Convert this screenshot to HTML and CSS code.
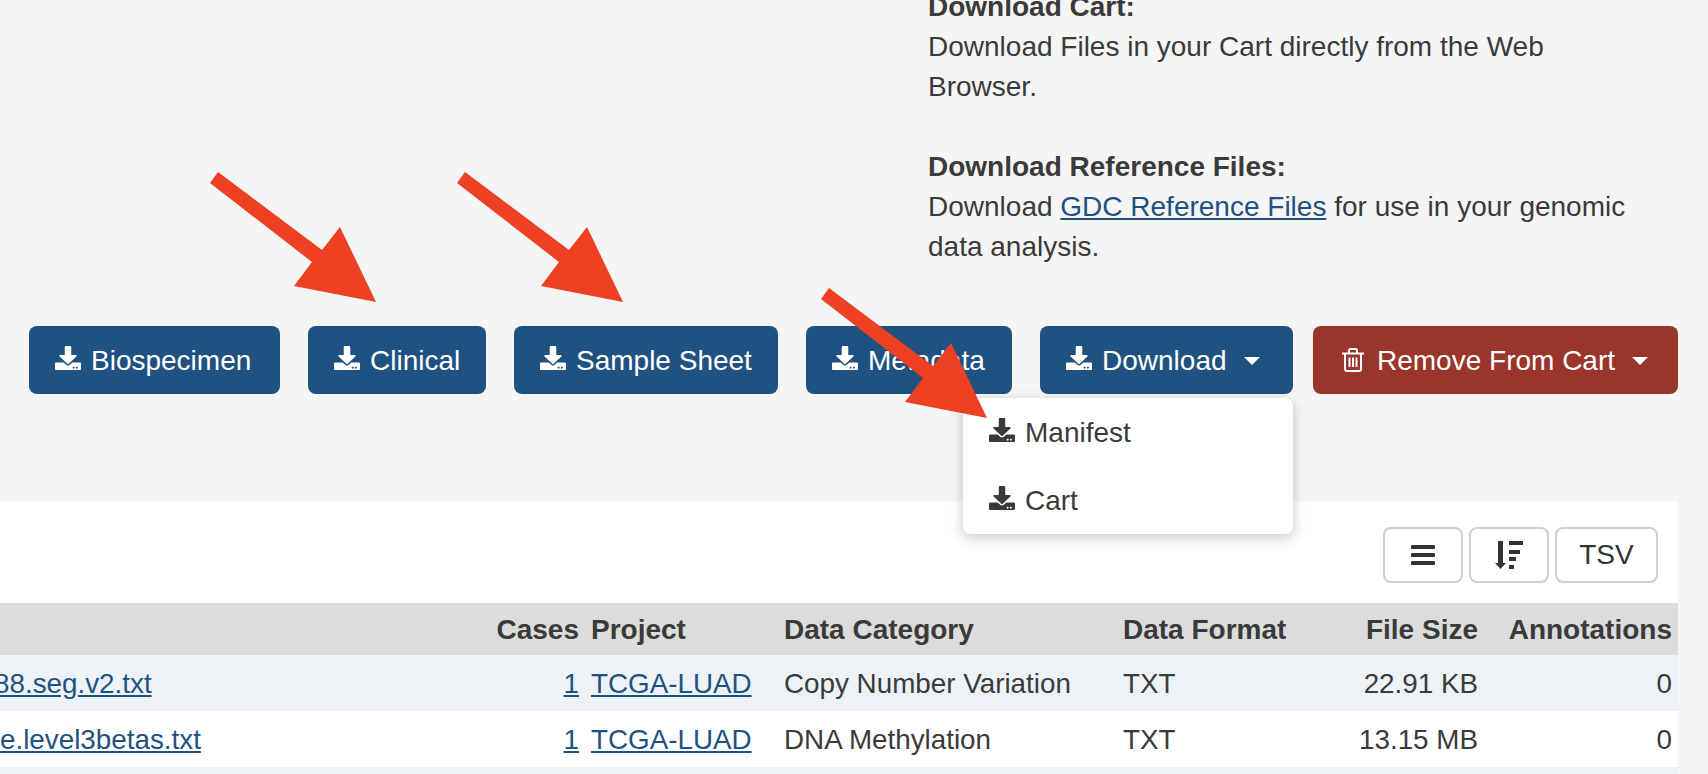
FILE: index.html
```html
<!DOCTYPE html>
<html>
<head>
    <title>Cart</title>
    <link rel="stylesheet" href="styles.css">
</head>
<body>
    <svg width="0" height="0" class="defs">
        <symbol id="icon-download" viewBox="0 0 512 512" preserveAspectRatio="none">
            <path d="M216 0h80c13.3 0 24 10.7 24 24v168h87.7c17.8 0 26.7 21.5 14.1 34.1L269.7 378.3c-7.5 7.5-19.8 7.5-27.3 0L90.1 226.1c-12.6-12.6-3.7-34.1 14.1-34.1H192V24c0-13.3 10.7-24 24-24zm296 376v112c0 13.3-10.7 24-24 24H24c-13.3 0-24-10.7-24-24V376c0-13.3 10.7-24 24-24h146.7l49 49c20.1 20.1 52.5 20.1 72.6 0l49-49H488c13.3 0 24 10.7 24 24zm-124 88c0-11-9-20-20-20s-20 9-20 20 9 20 20 20 20-9 20-20zm64 0c0-11-9-20-20-20s-20 9-20 20 9 20 20 20 20-9 20-20z"/>
        </symbol>
    </svg>

    <div class="page">
        <div class="help">
            <strong>Download Cart:</strong><br>
            Download Files in your Cart directly from the Web Browser.<br>
            <br>
            <strong>Download Reference Files:</strong><br>
            Download <a href="#">GDC Reference Files</a> for use in your genomic data analysis.
        </div>

        <div class="actions">
            <button class="btn btn-biospecimen"><svg class="icon"><use href="#icon-download"/></svg>Biospecimen</button>
            <button class="btn btn-clinical"><svg class="icon"><use href="#icon-download"/></svg>Clinical</button>
            <button class="btn btn-sample"><svg class="icon"><use href="#icon-download"/></svg>Sample Sheet</button>
            <button class="btn btn-metadata"><svg class="icon"><use href="#icon-download"/></svg>Metadata</button>
            <div class="dropdown">
                <button class="btn btn-download"><svg class="icon"><use href="#icon-download"/></svg>Download<span class="caret"></span></button>
                <ul class="menu">
                    <li><svg class="icon"><use href="#icon-download"/></svg>Manifest</li>
                    <li><svg class="icon"><use href="#icon-download"/></svg>Cart</li>
                </ul>
            </div>
            <button class="btn btn-danger">
                <svg class="icon-trash" viewBox="0 0 22 24" fill="none" stroke="currentColor" stroke-width="2">
                    <path d="M0 5.5h22M3 5.5V21a2 2 0 0 0 2 2h12a2 2 0 0 0 2-2V5.5M7 5V2.500A1.500 1.500 0 0 1 8.500 1h5A1.500 1.500 0 0 1 15 2.500V5M7.500 9.500v9.500M11 9.500v9.500M14.500 9.500v9.500"/>
                </svg>Remove From Cart<span class="caret"></span>
            </button>
        </div>

        <div class="panel">
            <div class="tools">
                <button class="tool">
                    <svg width="24" height="20" viewBox="0 0 24 20" fill="currentColor"><rect width="24" height="4" rx="1"/><rect y="8" width="24" height="4" rx="1"/><rect y="16" width="24" height="4" rx="1"/></svg>
                </button>
                <button class="tool">
                    <svg width="28" height="28" viewBox="0 0 28 28" fill="currentColor"><path d="M3 0h5v22h3l-5.500 6-5.500-6h3z"/><rect x="14" y="0" width="14" height="4"/><rect x="14" y="9" width="11" height="4"/><rect x="14" y="16" width="7" height="4"/><rect x="14" y="24" width="5" height="4"/></svg>
                </button>
                <button class="tool tool-text">TSV</button>
            </div>

            <table class="files">
                <colgroup>
                    <col class="col-file">
                    <col class="col-cases">
                    <col class="col-project">
                    <col class="col-category">
                    <col class="col-format">
                    <col class="col-size">
                    <col class="col-annotations">
                </colgroup>
                <thead>
                    <tr>
                        <th></th>
                        <th class="num">Cases</th>
                        <th>Project</th>
                        <th>Data Category</th>
                        <th>Data Format</th>
                        <th class="num">File Size</th>
                        <th class="num">Annotations</th>
                    </tr>
                </thead>
                <tbody>
                    <tr>
                        <td class="file"><a href="#" class="name-a">88.seg.v2.txt</a></td>
                        <td class="num"><a href="#">1</a></td>
                        <td><a href="#">TCGA-LUAD</a></td>
                        <td>Copy Number Variation</td>
                        <td>TXT</td>
                        <td class="num">22.91 KB</td>
                        <td class="num">0</td>
                    </tr>
                    <tr>
                        <td class="file"><a href="#">e.level3betas.txt</a></td>
                        <td class="num"><a href="#">1</a></td>
                        <td><a href="#">TCGA-LUAD</a></td>
                        <td>DNA Methylation</td>
                        <td>TXT</td>
                        <td class="num">13.15 MB</td>
                        <td class="num">0</td>
                    </tr>
                    <tr>
                        <td colspan="7">&nbsp;</td>
                    </tr>
                </tbody>
            </table>
        </div>

        <svg class="arrows" viewBox="0 0 1708 774" fill="#ee4023">
            <polygon points="218,172 322,250 340,227 376,302 294,286 312,262 210,183"/>
            <polygon points="465,172 569,250 587,227 623,302 541,286 559,262 457,183"/>
            <polygon points="829,288 933,366 951,343 987,418 905,402 923,378 821,299"/>
        </svg>
    </div>
</body>
</html>
```

FILE: styles.css
```css
* {
    box-sizing: border-box;
}

body {
    margin: 0;
    font-family: "Liberation Sans", Arial, sans-serif;
    font-size: 27.8px;
    color: #3a3a3a;
    background-color: #f5f5f5;
}

a {
    color: #1f5280;
}

.defs {
    display: block;
    height: 0;
}

.page {
    position: relative;
    height: 100vh;
    overflow: hidden;
}

.help {
    width: 710px;
    margin: -13px 0 59px 928px;
    font-size: 28px;
    line-height: 40px;
}

.actions {
    display: flex;
    gap: 28px;
    padding-left: 29px;
    height: 68px;
    margin-bottom: 107px;
}

.actions > :last-child {
    margin-left: -8px;
}

.btn {
    display: flex;
    align-items: center;
    height: 68px;
    padding: 2px 0 0 26px;
    border: none;
    border-radius: 8px;
    background-color: #1f5280;
    color: white;
    font-family: inherit;
    font-size: 28px;
    white-space: nowrap;
}

.btn-biospecimen { width: 251px; }
.btn-clinical { width: 178px; }
.btn-sample { width: 264px; }
.btn-metadata { width: 206px; }
.btn-download { width: 253px; }

.btn-danger {
    width: 365px;
    background-color: #9a352b;
    padding-left: 29px;
}

.icon {
    width: 26px;
    height: 24px;
    margin: 0 10px 6px 0;
    fill: currentColor;
    flex-shrink: 0;
}

.icon-trash {
    width: 22px;
    height: 24px;
    margin: 0 13px 2px 0;
}

.caret {
    width: 0;
    height: 0;
    margin-left: 17px;
    border-left: 8px solid transparent;
    border-right: 8px solid transparent;
    border-top: 8px solid white;
}

.dropdown {
    position: relative;
}

.menu {
    position: absolute;
    top: 72px;
    right: 0;
    width: 330px;
    margin: 0;
    padding: 0;
    list-style: none;
    background-color: white;
    border-radius: 8px;
    box-shadow: 0 4px 14px rgba(0, 0, 0, 0.22);
    z-index: 2;
}

.menu li {
    display: flex;
    align-items: center;
    height: 68px;
    padding: 2px 0 0 26px;
    font-size: 28px;
}

.panel {
    width: 1678px;
    background-color: white;
}

.tools {
    display: flex;
    justify-content: flex-end;
    gap: 6px;
    padding: 26px 20px 20px 0;
}

.tool {
    display: flex;
    align-items: center;
    justify-content: center;
    width: 80px;
    height: 56px;
    border: 2px solid #cfcfcf;
    border-radius: 8px;
    background-color: white;
    color: #333;
    font-family: inherit;
    font-size: 28px;
}

.tool-text {
    width: 103px;
}

.files {
    width: 1678px;
    table-layout: fixed;
    border-collapse: collapse;
}

.col-file { width: 480px; }
.col-cases { width: 105px; }
.col-project { width: 193px; }
.col-category { width: 339px; }
.col-format { width: 210px; }
.col-size { width: 157px; }
.col-annotations { width: 194px; }

.files th,
.files td {
    padding: 2px 6px 0;
    text-align: left;
    white-space: nowrap;
}

.files th {
    height: 52px;
    background-color: #dcdcdc;
    font-size: 28px;
    font-weight: bold;
}

.files td {
    height: 56px;
}

.files tbody tr:nth-child(odd) {
    background-color: #edf2f7;
}

.files .num {
    text-align: right;
}

.files .file {
    padding-left: 0;
    overflow: hidden;
}

.name-a {
    margin-left: -6px;
}

.arrows {
    position: absolute;
    top: 0;
    left: 0;
    width: 1708px;
    height: 774px;
    z-index: 3;
}
```
